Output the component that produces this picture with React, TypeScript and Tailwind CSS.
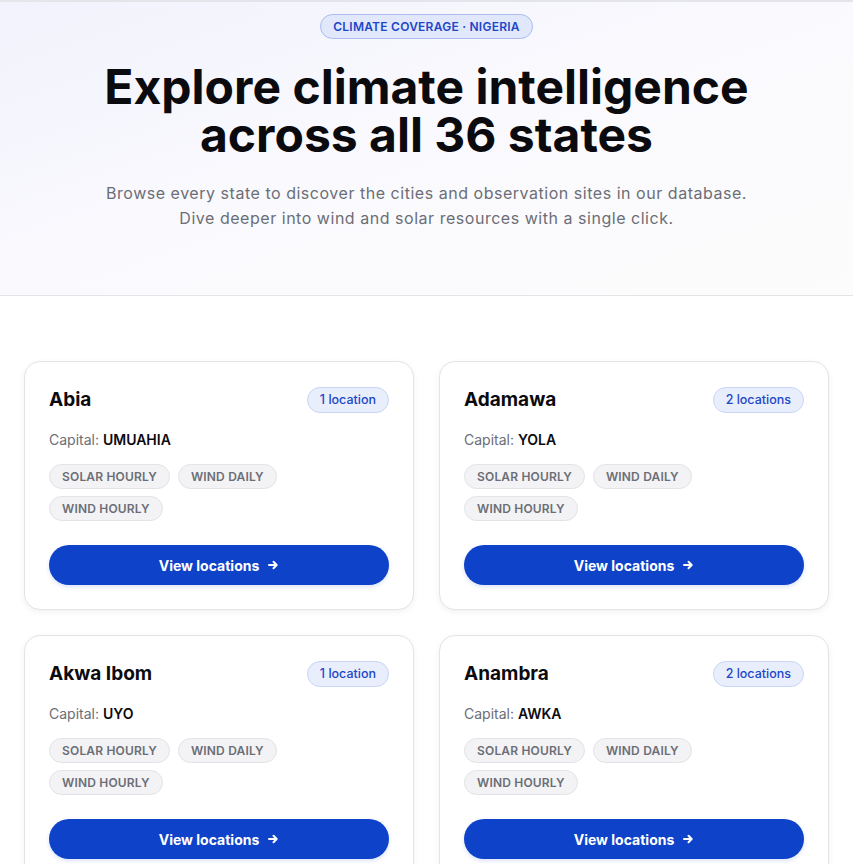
import React from "react";

type State = { name: string; count: string; capital: string };

const states: State[] = [
  { name: "Abia", count: "1 location", capital: "UMUAHIA" },
  { name: "Adamawa", count: "2 locations", capital: "YOLA" },
  { name: "Akwa Ibom", count: "1 location", capital: "UYO" },
  { name: "Anambra", count: "2 locations", capital: "AWKA" },
];

const tags = ["SOLAR HOURLY", "WIND DAILY", "WIND HOURLY"];

function Arrow() {
  return (
    <svg width="12" height="12" viewBox="0 0 12 12" fill="none" className="ml-2">
      <path d="M2 6h7.5M6.5 2.8 9.7 6 6.5 9.2" stroke="white" strokeWidth="2" strokeLinecap="round" strokeLinejoin="round" />
    </svg>
  );
}

function Card({ s }: { s: State }) {
  return (
    <div className="rounded-2xl border border-[#e3e4e8] bg-white p-6 shadow-[0_2px_6px_rgba(0,0,0,0.06)]">
      <div className="flex h-7 items-center justify-between">
        <h3 className="text-[19px] font-bold text-[#0b0b0f]">{s.name}</h3>
        <span className="rounded-full border border-[#c9d5f7] bg-[#e8eefc] px-3 py-[3px] text-[12.5px] font-medium text-[#1d46c8]">
          {s.count}
        </span>
      </div>
      <p className="mt-4 text-[14px] leading-5 text-[#6b6e76]">
        Capital: <span className="font-semibold text-[#0b0b0f]">{s.capital}</span>
      </p>
      <div className="mt-[14px] flex flex-wrap gap-x-2 gap-y-[7px]">
        {tags.map((t) => (
          <span
            key={t}
            className="rounded-full border border-[#e2e3e6] bg-[#f3f3f5] px-3 py-[4px] text-[12px] font-semibold leading-[15px] tracking-[0.015em] text-[#6b6e76]"
          >
            {t}
          </span>
        ))}
      </div>
      <button className="mt-6 flex h-10 w-full items-center justify-center rounded-full bg-[#0e42c9] text-[14px] font-bold text-white shadow-[0_2px_4px_rgba(14,66,201,0.15)]">
        View locations
        <Arrow />
      </button>
    </div>
  );
}

export default function App() {
  return (
    <div className="min-h-screen bg-white font-['Inter',sans-serif]">
      <section className="border-t-2 border-b border-t-[#e4e5ea] border-b-[#e3e4e8] bg-linear-to-br from-[#f1f2fc] via-[#fafafe] to-[#fcfcfc] pt-[11px] pb-[64px] text-center">
        <span className="inline-block rounded-full border border-[#a9bbf0] bg-[#e2e8fb] px-3 py-[4px] text-[12px] font-semibold leading-[15px] tracking-[0.02em] text-[#1d46c8]">
          CLIMATE COVERAGE · NIGERIA
        </span>
        <h1 className="mx-auto mt-[24px] max-w-[720px] text-[48px] font-bold leading-[48px] text-[#0b0b0f]">
          Explore climate intelligence
          <br />
          across all 36 states
        </h1>
        <p className="mx-auto mt-[22px] max-w-[780px] text-[16px] leading-[25px] tracking-[0.033em] text-[#6b6e76]">
          Browse every state to discover the cities and observation sites in our database.
          <br />
          Dive deeper into wind and solar resources with a single click.
        </p>
      </section>
      <main className="grid grid-cols-2 gap-x-[25px] gap-y-[25px] px-6 pt-[65px]">
        {states.map((s) => (
          <Card key={s.name} s={s} />
        ))}
      </main>
    </div>
  );
}
